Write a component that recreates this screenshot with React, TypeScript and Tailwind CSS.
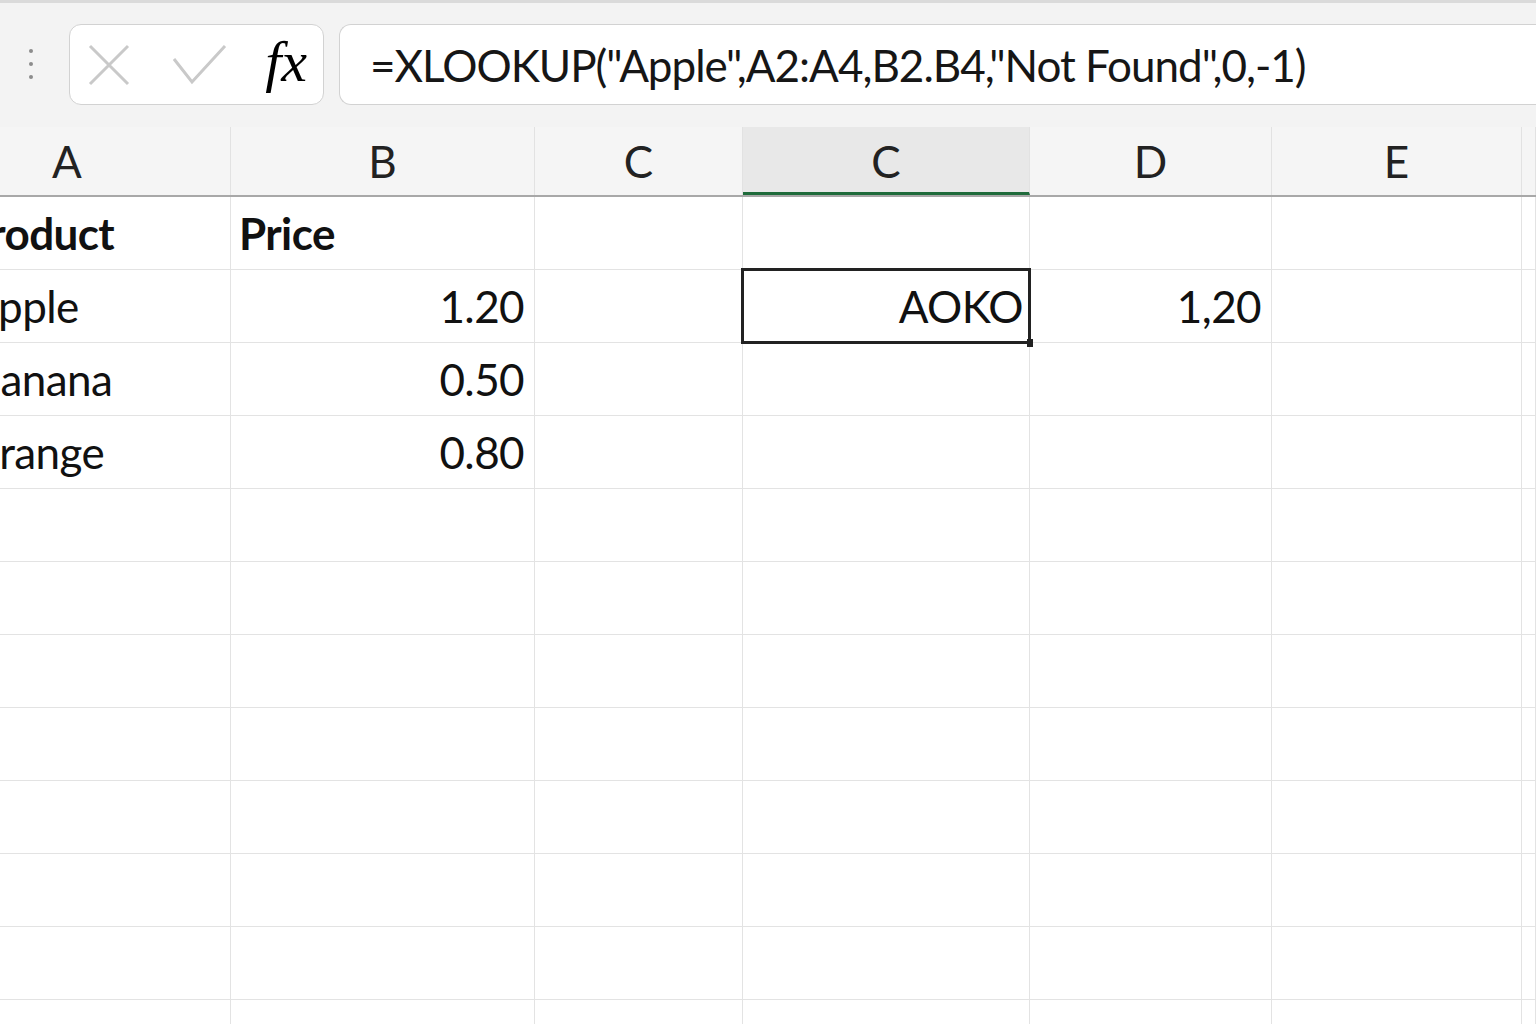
import React from 'react';

const cols = [
  { key: 'A', w: 'w-[231px]' },
  { key: 'B', w: 'w-[304px]' },
  { key: 'C', w: 'w-[208px]' },
  { key: 'C2', w: 'w-[287px]' },
  { key: 'D', w: 'w-[242px]' },
  { key: 'E', w: 'w-[250px]' },
  { key: 'F', w: 'flex-1' },
];

const headerLabels: Record<string, string> = { A: 'A', B: 'B', C: 'C', C2: 'C', D: 'D', E: 'E', F: '' };

type Cell = { text: string; bold?: boolean; align?: 'left' | 'right'; shift?: string };

const rows: Record<string, Cell>[] = [
  { A: { text: 'Product', bold: true, shift: '-ml-[37px]' }, B: { text: 'Price', bold: true, shift: 'ml-[8px]' } },
  { A: { text: 'Apple', shift: '-ml-[31px]' }, B: { text: '1.20', align: 'right' }, C2: { text: 'AOKO', align: 'right' }, D: { text: '1,20', align: 'right' } },
  { A: { text: 'Banana', shift: '-ml-[27px]' }, B: { text: '0.50', align: 'right' } },
  { A: { text: 'Orange', shift: '-ml-[35px]' }, B: { text: '0.80', align: 'right' } },
  {}, {}, {}, {}, {}, {}, {}, {}, {},
];

function XIcon() {
  return (
    <svg width="42" height="42" viewBox="0 0 42 42" fill="none" stroke="#c9c9c9" strokeWidth="3">
      <path d="M2 2L40 40M40 2L2 40" />
    </svg>
  );
}

function CheckIcon() {
  return (
    <svg width="54" height="40" viewBox="0 0 54 40" fill="none" stroke="#c9c9c9" strokeWidth="3">
      <path d="M1 14L19 37L52 1" />
    </svg>
  );
}

export default function App() {
  return (
    <div className="w-[1536px] h-[1024px] overflow-hidden bg-white font-['Lato',sans-serif] text-[#111]">
      {/* formula toolbar */}
      <div className="h-[127px] bg-[#f3f3f3] border-t-[3px] border-[#dadada] flex items-start pt-[21px]">
        <div className="w-[69px] h-[80px] flex flex-col items-center justify-center gap-[9px] pr-[8px]">
          <span className="w-[4px] h-[4px] rounded-full bg-[#8c8c8c]" />
          <span className="w-[4px] h-[4px] rounded-full bg-[#8c8c8c]" />
          <span className="w-[4px] h-[4px] rounded-full bg-[#8c8c8c]" />
        </div>
        <div className="w-[255px] h-[81px] bg-white border border-[#d2d2d2] rounded-[12px] flex items-center pl-[18px] pr-[16px]">
          <XIcon />
          <div className="ml-[43px]">
            <CheckIcon />
          </div>
          <span className="ml-auto font-['Liberation_Serif',serif] italic text-[58px] leading-none -mt-[6px] text-black">fx</span>
        </div>
        <div className="ml-[15px] flex-1 h-[81px] bg-white border border-r-0 border-[#d2d2d2] rounded-l-[12px] flex items-center pl-[30px]">
          <span className="text-[44px] leading-none tracking-[-1px] text-[#161616]">
            =XLOOKUP("Apple",A2:A4,B2.B4,"Not Found",0,-1)
          </span>
        </div>
      </div>

      {/* column headers */}
      <div className="flex h-[70px] bg-[#f5f5f5] border-b-2 border-[#a8a8a8]">
        {cols.map((c) => (
          <div
            key={c.key}
            className={`${c.w} shrink-0 h-full flex items-center border-r border-[#e2e2e2] text-[44px] text-[#222] ${
              c.key === 'A' ? 'justify-start pl-[52px]' : 'justify-center'
            } ${c.key === 'C2' ? 'bg-[#e8e8e8] border-b-[3px] border-b-[#1f6b3b] pt-[3px]' : ''}`}
          >
            {headerLabels[c.key]}
          </div>
        ))}
      </div>

      {/* grid rows */}
      {rows.map((r, i) => (
        <div key={i} className="flex h-[73px] border-b border-[#e3e3e3]">
          {cols.map((c) => {
            const cell = r[c.key];
            const selected = i === 1 && c.key === 'C2';
            return (
              <div
                key={c.key}
                className={`${c.w} shrink-0 h-full relative flex items-center border-r border-[#e3e3e3] ${
                  cell?.align === 'right' ? (selected ? 'justify-end pr-[6px]' : 'justify-end pr-[10px]') : 'justify-start'
                } ${selected ? 'overflow-visible z-10' : 'overflow-hidden'}`}
              >
                {cell && (
                  <span
                    className={`text-[44px] leading-none tracking-[-0.6px] whitespace-nowrap ${cell.bold ? 'font-bold' : ''} ${
                      cell.shift ?? ''
                    }`}
                  >
                    {cell.text}
                  </span>
                )}
                {selected && (
                  <>
                    <div className="absolute -left-[2px] -top-[2px] -right-[2px] -bottom-[2px] border-[3px] border-[#222] pointer-events-none" />
                    <div className="absolute -right-[4px] -bottom-[5px] w-[6px] h-[8px] bg-[#222]" />
                  </>
                )}
              </div>
            );
          })}
        </div>
      ))}
    </div>
  );
}
